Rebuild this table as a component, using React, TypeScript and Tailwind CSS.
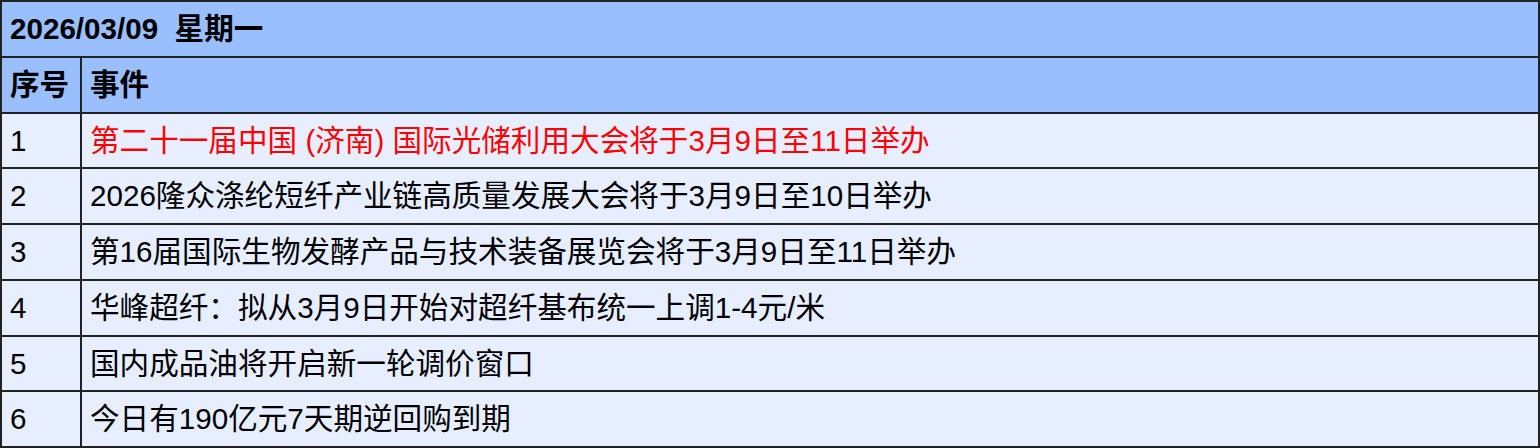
const rows: { text: string; red?: boolean }[] = [
  { text: "第二十一届中国 (济南) 国际光储利用大会将于3月9日至11日举办", red: true },
  { text: "2026隆众涤纶短纤产业链高质量发展大会将于3月9日至10日举办" },
  { text: "第16届国际生物发酵产品与技术装备展览会将于3月9日至11日举办" },
  { text: "华峰超纤：拟从3月9日开始对超纤基布统一上调1-4元/米" },
  { text: "国内成品油将开启新一轮调价窗口" },
  { text: "今日有190亿元7天期逆回购到期" },
];

const font = { fontFamily: '"Liberation Sans", "Noto Sans CJK SC", sans-serif' };

export default function App() {
  return (
    <div className="w-[1540px] h-[448px] border-2 border-[#222] text-[29.6px] leading-none text-black" style={font}>
      <div className="flex h-[55.75px] items-center border-b-2 border-[#222] bg-[#99bfff] pl-2 font-bold whitespace-pre">
        2026/03/09  星期一
      </div>
      <div className="flex h-[55.75px] border-b-2 border-[#222] bg-[#99bfff] font-bold">
        <div className="flex w-[80px] items-center border-r-2 border-[#222] pl-2">序号</div>
        <div className="flex items-center pl-2">事件</div>
      </div>
      {rows.map((row, i) => (
        <div
          key={i}
          className={`flex bg-[#e6eeff] ${i < rows.length - 1 ? "h-[55.75px] border-b-2 border-[#222]" : "h-[53.75px]"}`}
        >
          <div className="flex w-[80px] items-center border-r-2 border-[#222] pl-2">{i + 1}</div>
          <div className={`flex items-center pl-2 ${row.red ? "text-[#ff0000]" : ""}`}>{row.text}</div>
        </div>
      ))}
    </div>
  );
}
